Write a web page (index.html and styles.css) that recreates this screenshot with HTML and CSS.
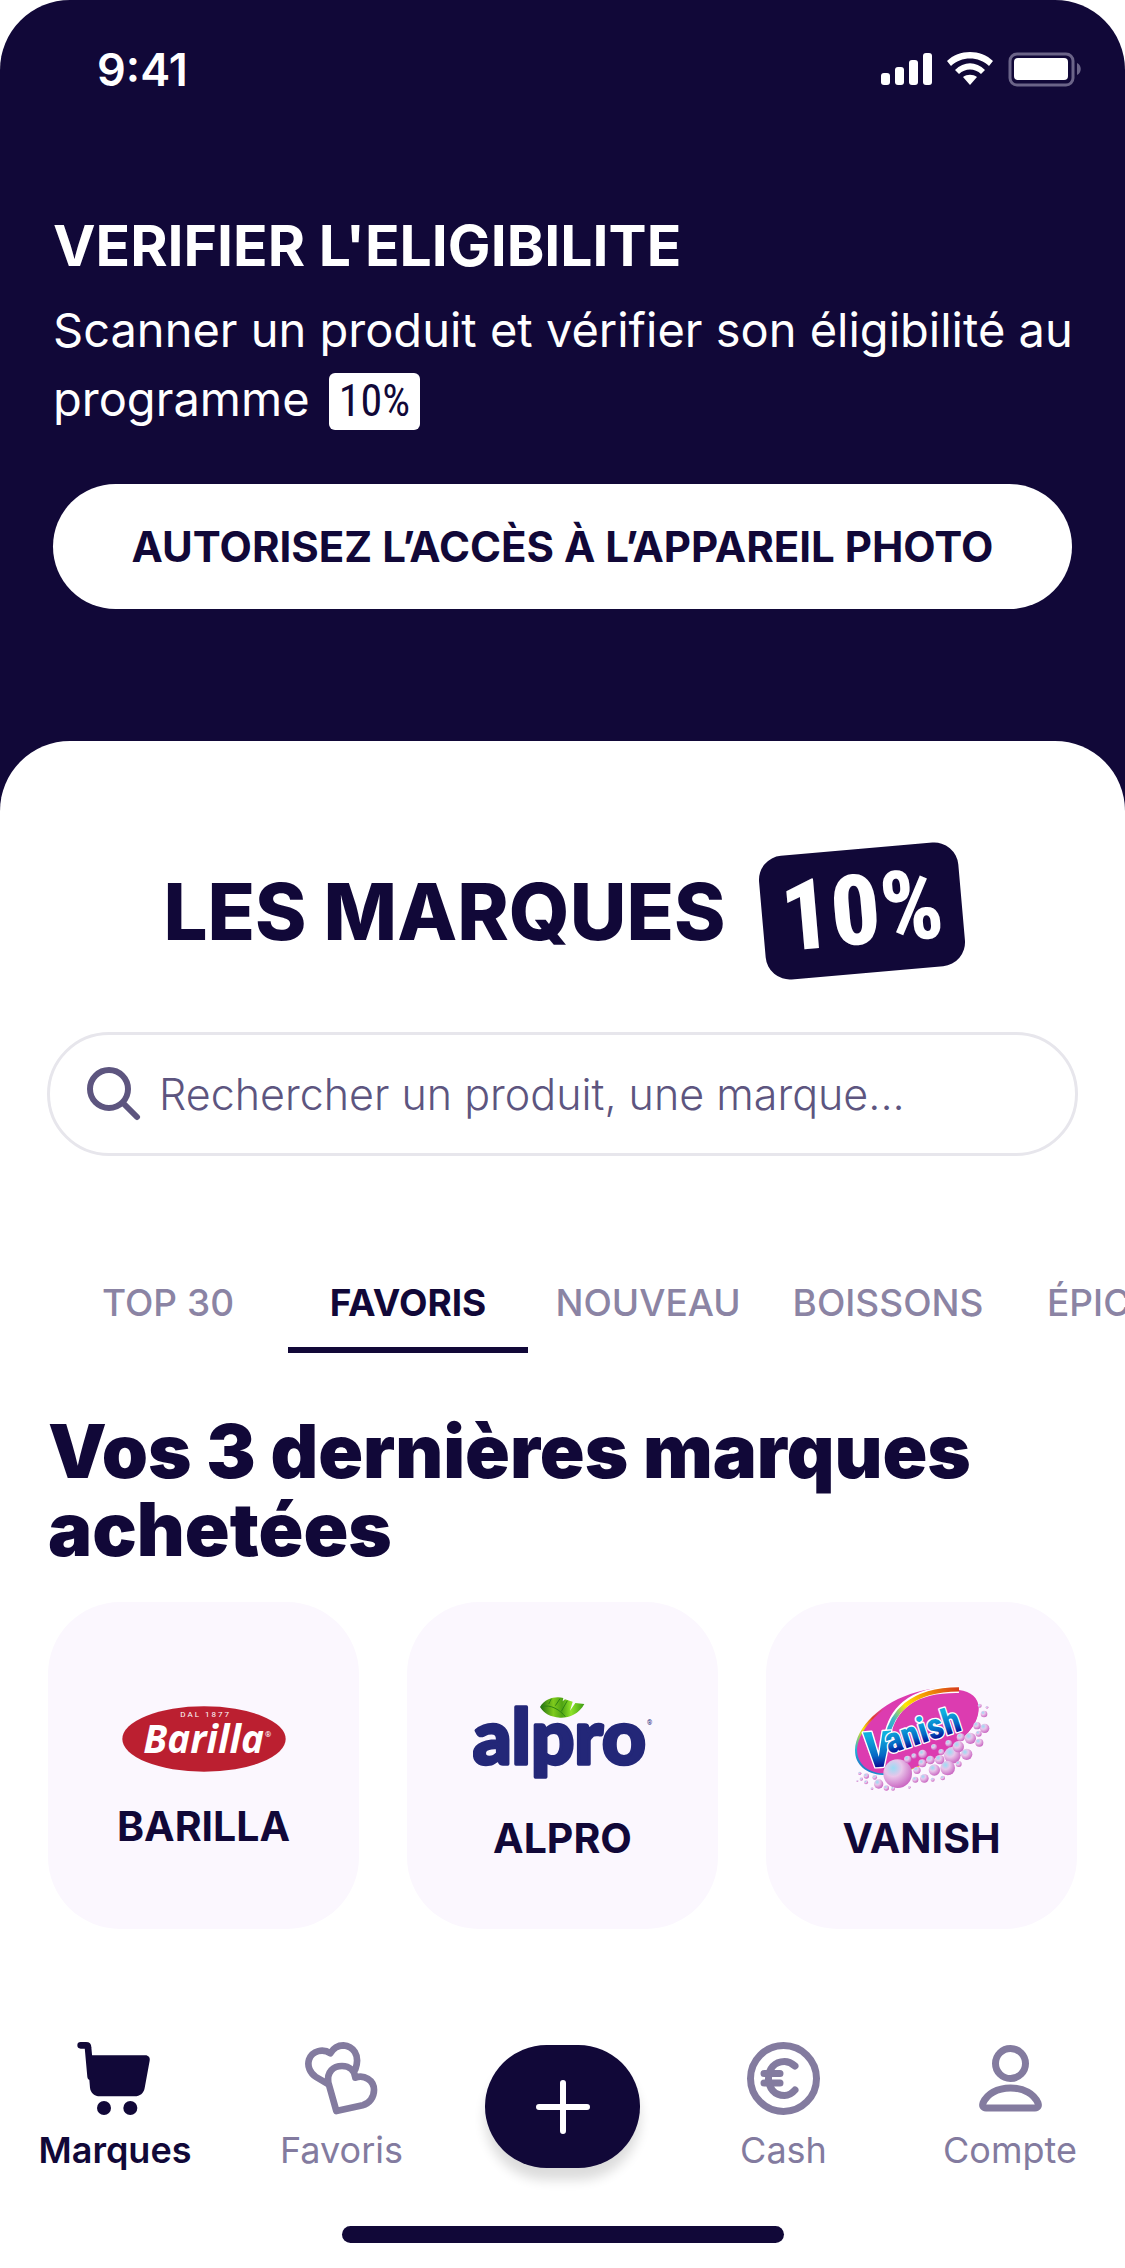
FILE: index.html
```html
<!DOCTYPE html>
<html lang="fr">
<head>
    <meta charset="UTF-8">
    <meta name="viewport" content="width=device-width, initial-scale=1.0">
    <title>Les marques 10%</title>
    <link rel="stylesheet" href="styles.css">
</head>
<body>
    <div class="app">
        <div class="status-bar">
            <span class="time">9:41</span>
            <svg class="status-icons" viewBox="0 0 204 36" aria-hidden="true">
                <g fill="#fff">
                    <rect x="1" y="22" width="9" height="12" rx="3"/>
                    <rect x="15" y="16" width="9" height="18" rx="3"/>
                    <rect x="29" y="9" width="9" height="25" rx="3"/>
                    <rect x="43" y="2" width="9" height="32" rx="3"/>
                    <path d="M67 10 C79 -2 101 -2 113 10 L109 15 C99 5 81 5 71 15 Z"/>
                    <path d="M75 19 C84 10 96 10 105 19 L101 23 C95 17 85 17 79 23 Z"/>
                    <path d="M83 26 C87 23 93 23 97 26 L90 34 Z"/>
                    <rect x="134" y="7" width="54" height="22" rx="4"/>
                </g>
                <rect x="130" y="3" width="63" height="31" rx="7" fill="none" stroke="#6b6488" stroke-width="3"/>
                <path d="M197 12 C202 14 202 22 197 24 Z" fill="#6b6488"/>
            </svg>
        </div>

        <header class="hero">
            <h1 class="hero-title">VERIFIER L'ELIGIBILITE</h1>
            <p class="hero-text">Scanner un produit et vérifier son éligibilité au programme <span class="tag">10%</span></p>
            <button class="btn" type="button">AUTORISEZ L’ACCÈS À L’APPAREIL PHOTO</button>
        </header>

        <main class="sheet">
            <div class="brand-title">
                <h2>LES MARQUES</h2>
                <span class="badge">10%</span>
            </div>

            <label class="search">
                <svg class="search-icon" viewBox="0 0 54 54" aria-hidden="true">
                    <circle cx="22" cy="22" r="19"/>
                    <path d="M36 36 L50 50"/>
                </svg>
                <input type="text" placeholder="Rechercher un produit, une marque..." aria-label="Rechercher un produit, une marque">
            </label>

            <div class="tabs">
                <button class="tab" type="button">TOP 30</button>
                <button class="tab active" type="button">FAVORIS</button>
                <button class="tab" type="button">NOUVEAU</button>
                <button class="tab" type="button">BOISSONS</button>
                <button class="tab" type="button">ÉPICERIE</button>
            </div>

            <section class="recent">
                <h3>Vos 3 dernières marques achetées</h3>
                <div class="cards">
                    <a class="card" href="#barilla">
                        <svg class="logo-barilla" viewBox="244 289 492 312" aria-hidden="true">
                            <ellipse cx="490" cy="445" rx="245" ry="98" fill="#bb1f30"/>
                            <text x="419" y="378" class="barilla-year">DAL 1877</text>
                            <text x="308" y="486" class="barilla-name">Barilla</text>
                            <text x="673" y="438" class="barilla-mark">®</text>
                        </svg>
                        <span class="card-name">BARILLA</span>
                    </a>
                    <a class="card" href="#alpro">
                        <svg class="logo-alpro" viewBox="217 253 540 384" aria-hidden="true">
                            <defs>
                                <linearGradient id="leaf" x1="0" y1="0" x2="1" y2="0">
                                    <stop offset="0" stop-color="#1f6a10"/>
                                    <stop offset=".3" stop-color="#7fcb1c"/>
                                    <stop offset=".5" stop-color="#4fa414"/>
                                    <stop offset=".7" stop-color="#8fe32a"/>
                                    <stop offset="1" stop-color="#3c9a14"/>
                                </linearGradient>
                            </defs>
                            <text x="216" y="519" class="alpro-name">alpro</text>
                            <path d="M418 349 C434 322 466 316 488 322 L486 332 L493 326 L516 333 L508 360 L524 337 L551 340 C534 371 505 382 478 381 C448 379 430 368 418 349 Z" fill="url(#leaf)"/>
                            <path d="M421 349 C450 338 480 360 494 378 M452 324 L444 340 M478 324 L464 345 M500 330 L482 362" fill="none" stroke="#2f8413" stroke-width="3"/>
                            <text x="739" y="404" class="alpro-mark">®</text>
                        </svg>
                        <span class="card-name">ALPRO</span>
                    </a>
                    <a class="card" href="#vanish">
                        <svg class="logo-vanish" viewBox="275 253 420 384" aria-hidden="true">
                            <defs>
                                <linearGradient id="rainbow" x1="0" y1="1" x2="1" y2="0">
                                    <stop offset="0" stop-color="#1646b4"/>
                                    <stop offset=".15" stop-color="#27b3dd"/>
                                    <stop offset=".3" stop-color="#f6e200"/>
                                    <stop offset=".4" stop-color="#e0402a"/>
                                    <stop offset=".5" stop-color="#dc3cb0"/>
                                    <stop offset="1" stop-color="#dc3cb0"/>
                                </linearGradient>
                                <linearGradient id="arc" gradientUnits="userSpaceOnUse" x1="365" y1="430" x2="590" y2="295">
                                    <stop offset="0" stop-color="#12a0dc"/>
                                    <stop offset=".2" stop-color="#3fb4c8"/>
                                    <stop offset=".4" stop-color="#ffe800"/>
                                    <stop offset=".6" stop-color="#f7a600"/>
                                    <stop offset="1" stop-color="#d8401c"/>
                                </linearGradient>
                                <linearGradient id="letters" x1="0" y1="0" x2="0" y2="1">
                                    <stop offset=".25" stop-color="#0fb0de"/>
                                    <stop offset=".6" stop-color="#0567c4"/>
                                    <stop offset=".8" stop-color="#060a92"/>
                                </linearGradient>
                                <radialGradient id="bubble" cx=".35" cy=".3" r=".75">
                                    <stop offset="0" stop-color="#9adcf4"/>
                                    <stop offset=".4" stop-color="#e9c5ea"/>
                                    <stop offset="1" stop-color="#c861c0"/>
                                </radialGradient>
                            </defs>
                            <path d="M366 553 C318 549 284 524 284 478 C286 410 362 334 470 304 C520 289 566 289 596 298 C632 302 655 322 655 352 C655 400 620 436 560 480 C500 520 430 556 366 553 Z" fill="url(#rainbow)"/>
                            <path d="M366 548 C322 545 290 520 290 474 C296 410 366 342 470 306 C560 290 654 296 654 352 C654 400 620 436 560 480 C500 520 430 552 366 548 Z" fill="#dc3cb0"/>
                            <path d="M380 440 C392 370 440 294 596 297" fill="none" stroke="#fff" stroke-width="20"/>
                            <path d="M380 440 C394 370 446 297 596 296" fill="none" stroke="url(#arc)" stroke-width="13"/>
                            <text x="314" y="532" transform="rotate(-4 314 532)" class="vanish-initial">V</text>
                            <text x="386" y="490" transform="rotate(-18 386 490)" class="vanish-name">anish</text>
                            <g fill="url(#bubble)">
                                <circle cx="412" cy="549" r="43"/>
                                <circle cx="576" cy="494" r="25"/>
                                <circle cx="562" cy="532" r="22"/>
                                <circle cx="522" cy="538" r="17"/>
                                <circle cx="619" cy="491" r="17"/>
                                <circle cx="630" cy="443" r="17"/>
                                <circle cx="594" cy="468" r="17"/>
                                <circle cx="601" cy="440" r="12"/>
                                <circle cx="657" cy="456" r="12"/>
                                <circle cx="655" cy="429" r="9"/>
                                <circle cx="673" cy="413" r="14"/>
                                <circle cx="650" cy="405" r="11"/>
                                <circle cx="671" cy="370" r="10"/>
                                <circle cx="658" cy="345" r="6"/>
                                <circle cx="680" cy="350" r="4"/>
                                <circle cx="487" cy="490" r="13"/>
                                <circle cx="461" cy="496" r="8"/>
                                <circle cx="442" cy="506" r="11"/>
                                <circle cx="521" cy="469" r="9"/>
                                <circle cx="543" cy="484" r="9"/>
                                <circle cx="565" cy="458" r="10"/>
                                <circle cx="510" cy="508" r="13"/>
                                <circle cx="486" cy="518" r="12"/>
                                <circle cx="538" cy="507" r="14"/>
                                <circle cx="470" cy="539" r="11"/>
                                <circle cx="492" cy="563" r="13"/>
                                <circle cx="465" cy="567" r="9"/>
                                <circle cx="595" cy="520" r="9"/>
                                <circle cx="547" cy="562" r="7"/>
                                <circle cx="517" cy="567" r="6"/>
                                <circle cx="355" cy="580" r="14"/>
                                <circle cx="378" cy="592" r="8"/>
                                <circle cx="398" cy="594" r="6"/>
                                <circle cx="318" cy="556" r="8"/>
                                <circle cx="317" cy="575" r="6"/>
                                <circle cx="298" cy="548" r="5"/>
                                <circle cx="303" cy="565" r="5"/>
                                <circle cx="343" cy="560" r="7"/>
                                <circle cx="335" cy="594" r="4"/>
                                <circle cx="447" cy="590" r="4"/>
                                <circle cx="291" cy="571" r="3"/>
                            </g>
                        </svg>
                        <span class="card-name">VANISH</span>
                    </a>
                </div>
            </section>

            <nav class="bottom-nav">
                <a class="nav-item active" href="#marques">
                    <svg class="nav-icon" viewBox="231 93 225 225" aria-hidden="true">
                        <path d="M242 106 H258 C263 106 264 109 264 112 L272 200" fill="none" stroke="currentColor" stroke-width="20" stroke-linecap="round"/>
                        <path d="M262 136 H436 C445 136 451 143 449 152 L434 234 C431 250 420 259 404 259 H300 C283 259 272 249 270 233 Z" fill="currentColor"/>
                        <circle cx="312" cy="294" r="21" fill="currentColor"/>
                        <circle cx="391" cy="294" r="21" fill="currentColor"/>
                    </svg>
                    <span>Marques</span>
                </a>
                <a class="nav-item" href="#favoris">
                    <svg class="nav-icon line" viewBox="912 93 225 225" aria-hidden="true">
                        <g stroke-width="20">
                            <path d="M982 221 L948 201 C930 190 921 168 927 149 C937 121 970 115 991 130 C1001 113 1015 106 1030 106 C1058 108 1082 134 1066 178"/>
                            <path d="M1009 303 L985 218 C980 186 1000 168 1026 168 C1050 168 1064 184 1066 203 C1092 193 1122 210 1122 240 C1122 262 1108 281 1088 286 Z"/>
                        </g>
                    </svg>
                    <span>Favoris</span>
                </a>
                <button class="fab" type="button" aria-label="Ajouter">
                    <svg viewBox="0 0 54 54" aria-hidden="true">
                        <path d="M27 3 V51 M3 27 H51"/>
                    </svg>
                </button>
                <a class="nav-item" href="#cash">
                    <svg class="nav-icon line" viewBox="0 0 75 75" aria-hidden="true">
                        <circle cx="37.5" cy="37.5" r="33"/>
                        <path d="M49 25 C45 21.500 42 20.500 38.500 20.500 C28.500 20.500 22.500 28 22.500 37.500 S28.500 54.500 38.500 54.500 C43 54.500 46 52.500 49 49 M18 32.500 H34 M18 42 H34"/>
                    </svg>
                    <span>Cash</span>
                </a>
                <a class="nav-item" href="#compte">
                    <svg class="nav-icon line" viewBox="0 0 75 75" aria-hidden="true">
                        <circle cx="37.5" cy="22.5" r="15"/>
                        <path d="M13 67 C10 67 9 65 10 62 C14 53 24 47 37.500 47 S61 53 65 62 C66 65 65 67 62 67 Z"/>
                    </svg>
                    <span>Compte</span>
                </a>
            </nav>
            <div class="home-bar"></div>
        </main>
    </div>
</body>
</html>
```

FILE: styles.css
```css
* {
    margin: 0;
    padding: 0;
    box-sizing: border-box;
}

body {
    background-color: #fff;
    color: #110838;
    font-family: Inter, 'Liberation Sans', sans-serif;
}

button,
input {
    font-family: inherit;
    border: none;
    background: none;
}

button {
    cursor: pointer;
}

a {
    color: inherit;
    text-decoration: none;
}

.app {
    display: flex;
    flex-direction: column;
    min-height: 100vh;
    background-color: #110838;
    border-radius: 70px 70px 0 0;
    overflow: hidden;
}

/* status bar */
.status-bar {
    display: flex;
    justify-content: space-between;
    align-items: center;
    height: 138px;
    padding: 0 41px 0 97px;
    color: #fff;
}

.time {
    font-size: 45px;
    font-weight: 600;
}

.status-icons {
    width: 204px;
    height: 36px;
}

/* hero */
.hero {
    padding: 74px 53px 132px;
    color: #fff;
}

.hero-title {
    font-size: 57px;
    line-height: 68px;
    font-weight: 700;
}

.hero-text {
    margin: 15px -12px 51px 0;
    font-size: 47px;
    line-height: 69px;
}

.tag,
.badge {
    font-family: 'Roboto Condensed', 'Liberation Sans Narrow', Roboto, sans-serif;
}

.tag {
    display: inline-block;
    margin-left: 6px;
    padding: 0 10px;
    border-radius: 6px;
    background-color: #fff;
    color: #110838;
    font-size: 44px;
    line-height: 57px;
}

.btn {
    display: block;
    width: 100%;
    height: 125px;
    border-radius: 64px;
    background-color: #fff;
    color: #110838;
    font-size: 42px;
    font-weight: 700;
}

/* white sheet */
.sheet {
    display: flex;
    flex-direction: column;
    flex: 1;
    padding-top: 108px;
    background-color: #fff;
    border-radius: 70px 70px 0 0;
}

.brand-title {
    display: flex;
    justify-content: center;
    align-items: center;
    gap: 36px;
}

.brand-title h2 {
    font-size: 78px;
    font-weight: 800;
}

.badge {
    width: 200px;
    border-radius: 24px;
    background-color: #110838;
    color: #fff;
    font-size: 98px;
    font-weight: 800;
    line-height: 124px;
    text-align: center;
    transform: rotate(-5deg);
}

.search {
    display: flex;
    align-items: center;
    gap: 18px;
    height: 124px;
    margin: 59px 47px 0;
    padding: 0 37px;
    border: 3px solid #e7e6ec;
    border-radius: 62px;
}

.search-icon {
    width: 54px;
    height: 54px;
    fill: none;
    stroke: #5d557f;
    stroke-width: 6;
    stroke-linecap: round;
}

.search input {
    flex: 1;
    min-width: 0;
    font-size: 43px;
    font-weight: 300;
    outline: none;
}

.search input::placeholder {
    color: #5d557f;
    opacity: 1;
}

.tabs {
    display: flex;
    margin-top: 125px;
    padding-left: 48px;
    overflow: hidden;
}

.tab {
    flex: 0 0 240px;
    padding-bottom: 22px;
    border-bottom: 6px solid transparent;
    color: #8b84a4;
    font-size: 37px;
    font-weight: 500;
    line-height: 44px;
}

.tab.active {
    border-bottom-color: #110838;
    color: #110838;
    font-weight: 700;
}

.recent {
    padding: 59px 48px 0;
}

.recent h3 {
    font-size: 74px;
    font-weight: 900;
    line-height: 78px;
}

.cards {
    display: flex;
    gap: 48px;
    margin-top: 34px;
}

.card {
    display: flex;
    flex: 1;
    flex-direction: column;
    justify-content: center;
    align-items: center;
    gap: 16px;
    height: 327px;
    border-radius: 72px;
    background-color: #fbf7fe;
}

.card-name {
    font-size: 41px;
    font-weight: 700;
    line-height: 38px;
}

/* brand logos */
.logo-barilla {
    width: 164px;
    height: 104px;
}

.logo-alpro {
    width: 180px;
    height: 128px;
}

.logo-vanish {
    width: 140px;
    height: 128px;
}

.barilla-name {
    fill: #fff;
    font: italic 700 116px 'Open Sans', sans-serif;
}

.barilla-year {
    fill: #fff;
    font: 400 24px Roboto, sans-serif;
    letter-spacing: 6px;
}

.barilla-mark {
    fill: #fff;
    font: 400 24px Roboto, sans-serif;
}

.alpro-name {
    fill: #232778;
    stroke: #232778;
    stroke-width: 10;
    stroke-linejoin: round;
    font: 900 228px Lato, sans-serif;
}

.alpro-mark {
    fill: #232778;
    font: 400 20px Roboto, sans-serif;
}

.vanish-name,
.vanish-initial {
    fill: url(#letters);
    stroke: #fff;
    stroke-width: 8;
    stroke-linejoin: round;
    paint-order: stroke;
    font: 800 108px 'Roboto Condensed', 'Liberation Sans Narrow', Roboto, sans-serif;
}

.vanish-initial {
    font-size: 150px;
}

/* bottom navigation */
.bottom-nav {
    display: grid;
    grid-template-columns: 230fr 223fr 219fr 223fr 230fr;
    align-items: center;
    justify-items: center;
    margin-top: auto;
    padding-top: 48px;
}

.nav-item {
    display: flex;
    flex-direction: column;
    align-items: center;
    gap: 12px;
    color: #837b9f;
    font-size: 36px;
    line-height: 44px;
}

.nav-item.active {
    color: #110838;
    font-weight: 600;
}

.nav-icon {
    width: 75px;
    height: 75px;
}

.line {
    fill: none;
    stroke: currentColor;
    stroke-width: 7;
    stroke-linecap: round;
    stroke-linejoin: round;
}

.fab {
    display: flex;
    justify-content: center;
    align-items: center;
    width: 155px;
    height: 123px;
    border-radius: 62px;
    background-color: #110838;
    box-shadow: 0 12px 12px rgba(0, 0, 0, 0.14);
}

.fab svg {
    width: 54px;
    height: 54px;
    fill: none;
    stroke: #fff;
    stroke-width: 6;
    stroke-linecap: round;
}

.home-bar {
    width: 442px;
    height: 17px;
    margin: 54px auto 25px;
    border-radius: 9px;
    background-color: #110838;
}
```
